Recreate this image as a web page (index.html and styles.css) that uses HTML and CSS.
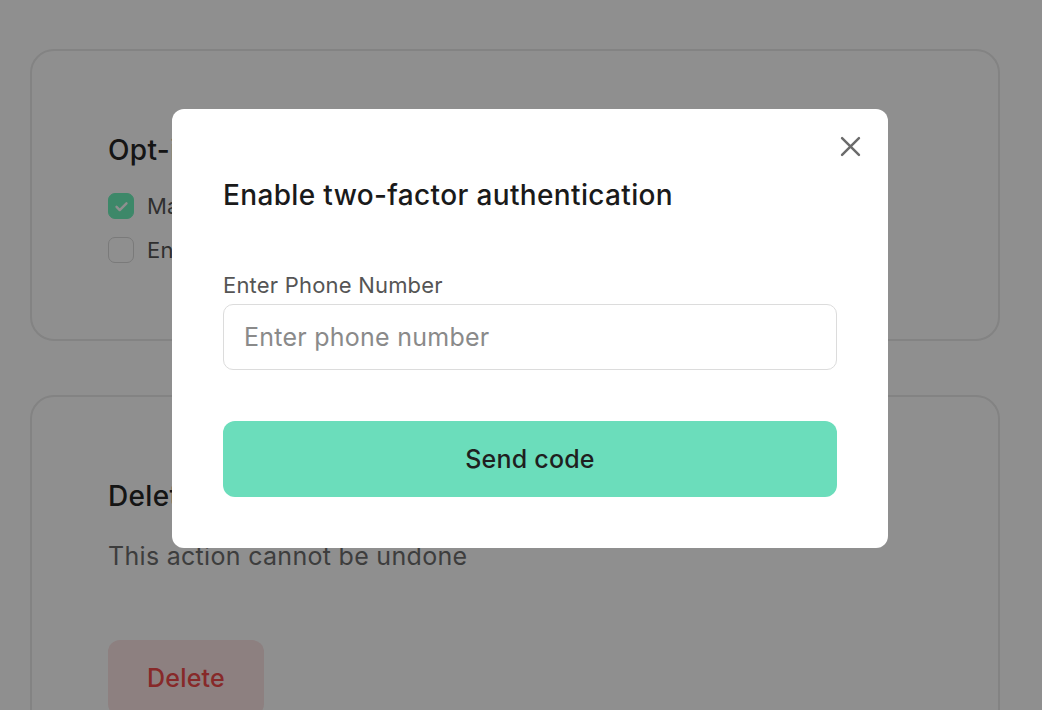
FILE: index.html
```html
<!DOCTYPE html>
<html lang="en">
<head>
    <meta charset="UTF-8">
    <meta name="viewport" content="width=device-width, initial-scale=1.0">
    <title>Security settings</title>
    <link rel="stylesheet" href="styles.css">
</head>
<body>
    <main class="settings">
        <section class="card">
            <h2 class="card-title">Opt-in preferences</h2>
            <div class="option-list">
                <label class="option">
                    <span class="checkbox checked">
                        <svg viewBox="0 0 24 24" width="17" height="17"><path d="M5 12.5l4.5 4.5L19 7.5" fill="none" stroke="#fff" stroke-width="3.4" stroke-linecap="round" stroke-linejoin="round"/></svg>
                    </span>
                    <span class="option-text">Marketing emails</span>
                </label>
                <label class="option">
                    <span class="checkbox"></span>
                    <span class="option-text">Enable two-factor authentication</span>
                </label>
            </div>
        </section>

        <section class="card">
            <h2 class="card-title">Delete account</h2>
            <p class="card-text">This action cannot be undone</p>
            <button class="btn-delete">Delete</button>
        </section>
    </main>

    <div class="overlay">
        <div class="modal">
            <button class="modal-close" aria-label="Close">
                <svg viewBox="0 0 24 24" width="27" height="27"><path d="M4.5 4.5l15 15M19.5 4.5l-15 15" fill="none" stroke="#6b6b6b" stroke-width="2.2" stroke-linecap="round"/></svg>
            </button>
            <h3 class="modal-title">Enable two-factor authentication</h3>
            <label class="field-label" for="phone">Enter Phone Number</label>
            <input id="phone" class="field-input" type="text" placeholder="Enter phone number">
            <button class="btn-primary">Send code</button>
        </div>
    </div>
</body>
</html>
```

FILE: styles.css
```css
/* styles.css */

* {
    box-sizing: border-box;
}

body {
    margin: 0;
    font-family: Inter, 'Noto Sans', sans-serif;
    background-color: #fff;
    color: #1a1a1a;
    height: 710px;
    overflow: hidden;
}

.settings {
    width: 970px;
    margin: 49px 0 0 30px;
    display: flex;
    flex-direction: column;
    gap: 54px;
}

.card {
    border: 2px solid #e9e9e9;
    border-radius: 24px;
    padding: 83px 76px 76px;
}

.card-title {
    margin: 0;
    font-size: 28px;
    font-weight: 500;
    line-height: 32px;
    letter-spacing: 0.35px;
    color: #262626;
}

.option-list {
    margin-top: 27px;
    display: flex;
    flex-direction: column;
    gap: 18px;
}

.option {
    display: flex;
    align-items: center;
    gap: 13px;
    font-size: 22px;
    letter-spacing: 0.2px;
    color: #555;
}

.checkbox {
    width: 26px;
    height: 26px;
    border: 1.5px solid #d9d9d9;
    border-radius: 7px;
    display: flex;
    align-items: center;
    justify-content: center;
}

.checkbox.checked {
    background-color: #6ef2bc;
    border-color: #6ef2bc;
}

.card-text {
    margin: 28px 0 0;
    font-size: 25px;
    line-height: 32px;
    letter-spacing: 0.3px;
    color: #6e6e6e;
}

.btn-delete {
    margin-top: 68px;
    height: 76px;
    padding: 0 39px;
    border: none;
    border-radius: 12px;
    background-color: #fbe4e4;
    color: #f04a4a;
    font-family: inherit;
    font-size: 25px;
    font-weight: 500;
    letter-spacing: 0.2px;
}

/* modal */
.overlay {
    position: fixed;
    inset: 0;
    background-color: rgba(0, 0, 0, 0.44);
    display: flex;
    align-items: flex-start;
    padding: 109px 0 0 172px;
}

.modal {
    position: relative;
    width: 716px;
    background-color: #fff;
    border-radius: 12px;
    padding: 70px 51px 51px;
    display: flex;
    flex-direction: column;
}

.modal-close {
    position: absolute;
    top: 24px;
    right: 24px;
    padding: 0;
    border: none;
    background: none;
    display: flex;
}

.modal-title {
    margin: 0 0 60px;
    font-size: 28px;
    font-weight: 500;
    line-height: 32px;
    letter-spacing: 0.35px;
    color: #1a1a1a;
}

.field-label {
    font-size: 22px;
    line-height: 28px;
    letter-spacing: 0.2px;
    color: #555;
    margin-bottom: 5px;
}

.field-input {
    height: 66px;
    border: 1px solid #dcdcdc;
    border-radius: 10px;
    padding: 0 20px;
    font-family: inherit;
    font-size: 25px;
    letter-spacing: 0.25px;
    color: #1a1a1a;
    outline: none;
}

.field-input::placeholder {
    color: #8a8a8a;
}

.btn-primary {
    margin-top: 51px;
    height: 76px;
    border: none;
    border-radius: 12px;
    background-color: #6bddbb;
    color: #1f1f1f;
    font-family: inherit;
    font-size: 25px;
    font-weight: 500;
    letter-spacing: 0.2px;
}
```
